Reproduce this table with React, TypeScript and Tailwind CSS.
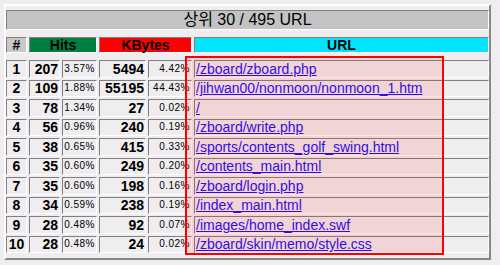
import React from "react";

const rows: [string, string, string, string, string, string][] = [
  ["1", "207", "3.57%", "5494", "4.42%", "/zboard/zboard.php"],
  ["2", "109", "1.88%", "55195", "44.43%", "/jihwan00/nonmoon/nonmoon_1.htm"],
  ["3", "78", "1.34%", "27", "0.02%", "/"],
  ["4", "56", "0.96%", "240", "0.19%", "/zboard/write.php"],
  ["5", "38", "0.65%", "415", "0.33%", "/sports/contents_golf_swing.html"],
  ["6", "35", "0.60%", "249", "0.20%", "/contents_main.html"],
  ["7", "35", "0.60%", "198", "0.16%", "/zboard/login.php"],
  ["8", "34", "0.59%", "238", "0.19%", "/index_main.html"],
  ["9", "28", "0.48%", "92", "0.07%", "/images/home_index.swf"],
  ["10", "28", "0.48%", "24", "0.02%", "/zboard/skin/memo/style.css"],
];

const inset =
  "border border-t-[#808080] border-l-[#808080] border-b-white border-r-white";

export default function App() {
  return (
    <div
      className="relative w-[500px] h-[265px] overflow-hidden bg-[#efedef] text-black"
      style={{ fontFamily: '"Liberation Sans", "Noto Sans CJK KR", Arial, sans-serif' }}
    >
      <div className="ml-[4px] mt-[4px] w-[487px] h-[256px] border-2 border-t-white border-l-white border-r-[#888888] border-b-[#888888] pt-[4px] flex flex-col">
        <div
          className={`${inset} h-[20px] bg-[#c3c3c3] flex items-center justify-center text-[16px] leading-none`}
        >
          상위 30 / 495 URL
        </div>
        <div className="mt-[7px] h-[16px] flex gap-[2px] text-[14px] font-bold leading-none">
          <div className={`${inset} w-[21px] bg-[#c8c8c8] flex items-center justify-center`}>#</div>
          <div className={`${inset} w-[68px] bg-[#008040] flex items-center justify-center`}>Hits</div>
          <div className={`${inset} w-[93px] bg-[#ff0000] flex items-center justify-center`}>KBytes</div>
          <div className={`${inset} flex-1 bg-[#00e4ff] flex items-center justify-center`}>URL</div>
        </div>
        <div className="mt-[7px] h-[193px] flex flex-col gap-[2px]">
          {rows.map((r) => (
            <div key={r[0]} className="flex-1 flex gap-[2px] leading-none">
              <div className={`${inset} w-[21px] flex items-center justify-center text-[14px] font-bold`}>
                {r[0]}
              </div>
              <div className={`${inset} w-[31px] flex items-center justify-end pr-[1px] text-[14px] font-bold`}>
                {r[1]}
              </div>
              <div className={`${inset} w-[35px] flex items-center justify-end pr-[1px] text-[10px] tracking-[0.5px]`}>
                {r[2]}
              </div>
              <div className={`${inset} w-[47px] flex items-center justify-end pr-[1px] text-[14px] font-bold`}>
                {r[3]}
              </div>
              <div className={`${inset} w-[44px] flex items-center justify-end pr-[1px] text-[10px] tracking-[0.5px]`}>
                {r[4]}
              </div>
              <div className={`${inset} flex-1 flex items-center pl-[1px] text-[14px]`}>
                <a href="#" className="text-[#1a0dff] underline">
                  {r[5]}
                </a>
              </div>
            </div>
          ))}
        </div>
      </div>
      <div className="absolute left-[185px] top-[56px] w-[259px] h-[199px] border-2 border-[#ff0000] bg-[rgba(255,0,0,0.1)]" />
    </div>
  );
}
